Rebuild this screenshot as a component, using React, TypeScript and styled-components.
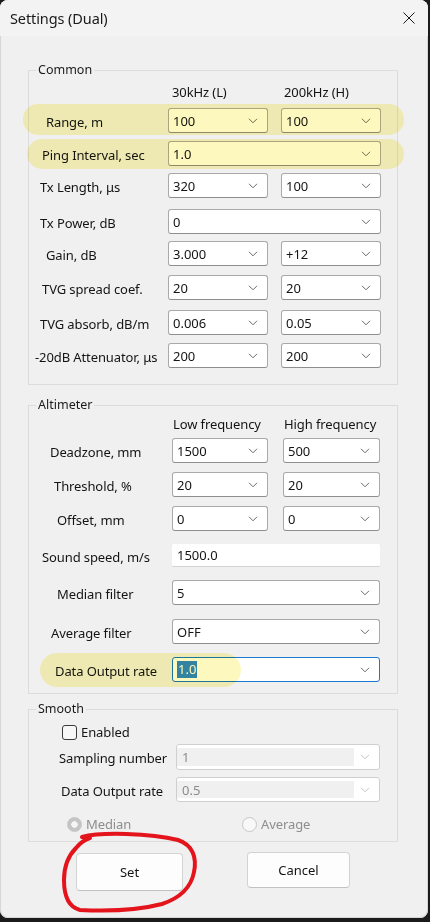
import React from "react";
import styled, { createGlobalStyle } from "styled-components";

const GlobalStyle = createGlobalStyle`
  html, body {
    margin: 0;
    padding: 0;
    background: #1b1b1b;
  }
  body {
    font-family: "Noto Sans", "Open Sans", Arial, sans-serif;
  }
`;

const UI_FONT = `"Noto Sans", "Open Sans", Arial, sans-serif`;

const Desktop = styled.div`
  width: 430px;
  height: 922px;
  background: #1b1b1b;
  overflow: hidden;
`;

const Window = styled.div`
  position: relative;
  width: 428px;
  height: 918px;
  background: #f0f0f0;
  border-radius: 8px;
  box-shadow: inset 0 0 0 1px #d6d6d6;
  display: flex;
  flex-direction: column;
  overflow: hidden;
  font-family: ${UI_FONT};
  color: #111;
`;

const TitleBar = styled.div`
  height: 36px;
  display: flex;
  align-items: center;
  justify-content: space-between;
  padding: 0 13px 0 10px;
  background: #f3f3f3;
`;

const Title = styled.span`
  font-size: 14.5px;
  color: #1a1a1a;
  letter-spacing: -0.1px;
`;

const CloseGlyph = styled.svg`
  width: 12px;
  height: 12px;
  display: block;
`;

const Body = styled.div`
  display: flex;
  flex-direction: column;
  padding: 26px 30px 0 28px;
`;

const Group = styled.fieldset<{ $mt?: number; $pt: number; $pb: number }>`
  margin: ${(p) => p.$mt ?? 0}px 0 0 0;
  padding: ${(p) => p.$pt}px 0 ${(p) => p.$pb}px 0;
  border: 1px solid #dcdcdc;
  border-radius: 0;
  min-width: 0;
  display: flex;
  flex-direction: column;
`;

const Caption = styled.legend`
  margin-left: 7px;
  padding: 0 2px;
  font-size: 12.5px;
  line-height: 16px;
  color: #1a1a1a;
`;

const Row = styled.div<{ $cols: string; $gap: number; $mt: number; $h?: number }>`
  display: grid;
  grid-template-columns: ${(p) => p.$cols};
  column-gap: ${(p) => p.$gap}px;
  align-items: center;
  height: ${(p) => p.$h ?? 25}px;
  margin-top: ${(p) => p.$mt}px;
`;

const Label = styled.span<{ $indent: number }>`
  padding-left: ${(p) => p.$indent}px;
  font-size: 13px;
  line-height: 16px;
  padding-top: 2px;
  color: #141414;
  white-space: nowrap;
  letter-spacing: -0.1px;
`;

const ColHead = styled.span`
  font-size: 13px;
  line-height: 16px;
  color: #141414;
  white-space: nowrap;
  letter-spacing: -0.1px;
`;

const Combo = styled.div<{ $span?: number; $state?: "normal" | "focus" | "off" }>`
  grid-column: span ${(p) => p.$span ?? 1};
  height: 100%;
  box-sizing: border-box;
  display: flex;
  align-items: center;
  justify-content: space-between;
  padding: 0 9px 0 4px;
  border-radius: 3px;
  border: 1px solid
    ${(p) =>
      p.$state === "focus" ? "#1a78d4" : p.$state === "off" ? "#cfcfcf" : "#a9a9a9"};
  border-bottom-color: ${(p) =>
    p.$state === "focus" ? "#1a78d4" : p.$state === "off" ? "#cfcfcf" : "#8e8e8e"};
  background: #ffffff;
`;

const ComboText = styled.span<{ $off?: boolean }>`
  flex: ${(p) => (p.$off ? "1 1 auto" : "0 1 auto")};
  align-self: ${(p) => (p.$off ? "stretch" : "center")};
  display: flex;
  align-items: center;
  margin: ${(p) => (p.$off ? "3px 6px 3px -4px" : "0")};
  padding-left: ${(p) => (p.$off ? "5px" : "0")};
  background: ${(p) => (p.$off ? "#f0f0f0" : "transparent")};
  font-size: 13px;
  line-height: 16px;
  color: ${(p) => (p.$off ? "#8c8c8c" : "#141414")};
  white-space: nowrap;
`;

const Selected = styled.span`
  background: #3388d8;
  color: #ffffff;
  padding: 0 1px;
  line-height: 17px;
`;

const ChevronGlyph = styled.svg`
  width: 10px;
  height: 6px;
  flex: none;
  display: block;
`;

const TextField = styled.div<{ $span?: number }>`
  grid-column: span ${(p) => p.$span ?? 1};
  height: 100%;
  box-sizing: border-box;
  display: flex;
  align-items: center;
  padding: 0 5px;
  background: #ffffff;
  border-bottom: 1px solid #d2d2d2;
  border-radius: 2px;
  font-size: 13px;
  color: #141414;
`;

const CheckRow = styled.label`
  display: flex;
  align-items: center;
  gap: 4px;
  height: 16px;
  padding-left: 33px;
`;

const CheckBox = styled.span`
  width: 13px;
  height: 13px;
  border: 1px solid #3a3a3a;
  border-radius: 3px;
  background: #f7f7f7;
  flex: none;
`;

const CheckText = styled.span`
  font-size: 13px;
  color: #141414;
  letter-spacing: -0.1px;
`;

const RadioRow = styled.div`
  display: grid;
  grid-template-columns: 175px 1fr;
  height: 16px;
  margin-top: 13px;
  padding-left: 38px;
`;

const RadioOption = styled.span`
  display: flex;
  align-items: center;
  gap: 4px;
`;

const RadioDot = styled.span<{ $checked?: boolean }>`
  width: 15px;
  height: 15px;
  box-sizing: border-box;
  border-radius: 50%;
  flex: none;
  border: 1px solid #c6c6c6;
  background: ${(p) =>
    p.$checked
      ? "radial-gradient(circle, #f4f4f4 0 3px, #c4c4c4 3.5px)"
      : "#f8f8f8"};
`;

const RadioText = styled.span`
  font-size: 13px;
  color: #8d8d8d;
  letter-spacing: -0.1px;
`;

const ButtonBar = styled.div`
  display: flex;
  align-items: flex-start;
  gap: 64px;
  margin-top: 10px;
  padding-left: 48px;
`;

const DialogButton = styled.button<{ $w: number; $h: number; $mt: number }>`
  width: ${(p) => p.$w}px;
  height: ${(p) => p.$h}px;
  margin-top: ${(p) => p.$mt}px;
  border: 1px solid #d3d3d3;
  border-bottom-color: #c2c2c2;
  border-radius: 4px;
  background: #fdfdfd;
  font-family: ${UI_FONT};
  font-size: 13px;
  color: #141414;
  padding: 0;
`;

const Markup = styled.svg`
  position: absolute;
  left: 0;
  top: 0;
  width: 428px;
  height: 918px;
  pointer-events: none;
`;

const Chevron = ({ off }: { off?: boolean }) => (
  <ChevronGlyph viewBox="0 0 10 6">
    <path
      d="M1 0.8 L5 4.8 L9 0.8"
      fill="none"
      stroke={off ? "#c4c4c4" : "#6a6a6a"}
      strokeWidth="1"
    />
  </ChevronGlyph>
);

type Field =
  | { kind: "combo"; value: React.ReactNode; span?: number; state?: "normal" | "focus" | "off" }
  | { kind: "text"; value: string; span?: number };

type RowSpec = { label: string; indent: number; mt: number; h?: number; fields: Field[] };

type Layout = { cols: string; gap: number };

// label column already excludes the gap that follows it
const COMMON: Layout = { cols: "126px 100px 100px", gap: 13 };
const ALTIMETER: Layout = { cols: "128px 96px 97px", gap: 15 };
const SMOOTH: Layout = { cols: "147px 204px", gap: 0 };

const commonRows: RowSpec[] = [
  { label: "Range, m", indent: 17, mt: 8, fields: [{ kind: "combo", value: "100" }, { kind: "combo", value: "100" }] },
  { label: "Ping Interval, sec", indent: 13, mt: 8, fields: [{ kind: "combo", value: "1.0", span: 2 }] },
  { label: "Tx Length, μs", indent: 11, mt: 7, fields: [{ kind: "combo", value: "320" }, { kind: "combo", value: "100" }] },
  { label: "Tx Power, dB", indent: 11, mt: 11, fields: [{ kind: "combo", value: "0", span: 2 }] },
  { label: "Gain, dB", indent: 17, mt: 7, fields: [{ kind: "combo", value: "3.000" }, { kind: "combo", value: "+12" }] },
  { label: "TVG spread coef.", indent: 13, mt: 9, fields: [{ kind: "combo", value: "20" }, { kind: "combo", value: "20" }] },
  { label: "TVG absorb, dB/m", indent: 11, mt: 10, fields: [{ kind: "combo", value: "0.006" }, { kind: "combo", value: "0.05" }] },
  { label: "-20dB Attenuator, μs", indent: 6, mt: 8, fields: [{ kind: "combo", value: "200" }, { kind: "combo", value: "200" }] },
];

const altimeterRows: RowSpec[] = [
  { label: "Deadzone, mm", indent: 21, mt: 6, fields: [{ kind: "combo", value: "1500" }, { kind: "combo", value: "500" }] },
  { label: "Threshold, %", indent: 25, mt: 9, fields: [{ kind: "combo", value: "20" }, { kind: "combo", value: "20" }] },
  { label: "Offset, mm", indent: 28, mt: 9, fields: [{ kind: "combo", value: "0" }, { kind: "combo", value: "0" }] },
  { label: "Sound speed, m/s", indent: 13, mt: 13, h: 23, fields: [{ kind: "text", value: "1500.0", span: 2 }] },
  { label: "Median filter", indent: 28, mt: 13, fields: [{ kind: "combo", value: "5", span: 2 }] },
  { label: "Average filter", indent: 22, mt: 14, fields: [{ kind: "combo", value: "OFF", span: 2 }] },
  {
    label: "Data Output rate",
    indent: 26,
    mt: 13,
    fields: [{ kind: "combo", value: <Selected>1.0</Selected>, span: 2, state: "focus" }],
  },
];

const smoothRows: RowSpec[] = [
  { label: "Sampling number", indent: 30, mt: 4, h: 26, fields: [{ kind: "combo", value: "1", state: "off" }] },
  { label: "Data Output rate", indent: 32, mt: 7, h: 25, fields: [{ kind: "combo", value: "0.5", state: "off" }] },
];

const FieldView = ({ f }: { f: Field }) => {
  if (f.kind === "text") return <TextField $span={f.span}>{f.value}</TextField>;
  const off = f.state === "off";
  return (
    <Combo $span={f.span} $state={f.state}>
      <ComboText $off={off}>{f.value}</ComboText>
      <Chevron off={off} />
    </Combo>
  );
};

const Rows = ({ rows, layout }: { rows: RowSpec[]; layout: Layout }) => (
  <>
    {rows.map((r) => (
      <Row key={r.label + r.mt} $cols={layout.cols} $gap={layout.gap} $mt={r.mt} $h={r.h}>
        <Label $indent={r.indent}>{r.label}</Label>
        {r.fields.map((f, i) => (
          <FieldView key={i} f={f} />
        ))}
      </Row>
    ))}
  </>
);

export default function App() {
  return (
    <Desktop>
      <GlobalStyle />
      <Window>
        <TitleBar>
          <Title>Settings (Dual)</Title>
          <CloseGlyph viewBox="0 0 12 12">
            <path d="M0.5 0.5 L11.5 11.5 M11.5 0.5 L0.5 11.5" stroke="#1a1a1a" strokeWidth="1" />
          </CloseGlyph>
        </TitleBar>

        <Body>
          <Group $pt={6} $pb={16}>
            <Caption>Common</Caption>
            <Row $cols="143px 112px 100px" $gap={0} $mt={0} $h={16}>
              <span />
              <ColHead>30kHz (L)</ColHead>
              <ColHead>200kHz (H)</ColHead>
            </Row>
            <Rows rows={commonRows} layout={COMMON} />
          </Group>

          <Group $mt={12} $pt={3} $pb={11}>
            <Caption>Altimeter</Caption>
            <Row $cols="144px 111px 100px" $gap={0} $mt={0} $h={16}>
              <span />
              <ColHead>Low frequency</ColHead>
              <ColHead>High frequency</ColHead>
            </Row>
            <Rows rows={altimeterRows} layout={ALTIMETER} />
          </Group>

          <Group $mt={7} $pt={7} $pb={10}>
            <Caption>Smooth</Caption>
            <CheckRow>
              <CheckBox />
              <CheckText>Enabled</CheckText>
            </CheckRow>
            <Rows rows={smoothRows} layout={SMOOTH} />
            <RadioRow>
              <RadioOption>
                <RadioDot $checked />
                <RadioText>Median</RadioText>
              </RadioOption>
              <RadioOption>
                <RadioDot />
                <RadioText>Average</RadioText>
              </RadioOption>
            </RadioRow>
          </Group>

          <ButtonBar>
            <DialogButton $w={107} $h={38} $mt={1}>Set</DialogButton>
            <DialogButton $w={103} $h={36} $mt={0}>Cancel</DialogButton>
          </ButtonBar>
        </Body>

        {/* highlighter strokes and pen loop drawn over the dialog */}
        <Markup viewBox="0 0 428 918">
          <g style={{ mixBlendMode: "multiply" }} fill="#fcf391" opacity="0.6">
            <rect x="23" y="104" width="381" height="31" rx="15" />
            <rect x="27" y="139" width="377" height="30" rx="15" />
            <rect x="40" y="653" width="201" height="34" rx="17" />
          </g>
          <path
            d="M82 837 C100 832 150 833 178 840 C193 845 197 858 194 872 C191 888 180 898 162 904 C135 911 100 911 80 910 C68 907 64 895 64 880 C64 866 68 856 76 848 C80 843 84 840 90 838"
            fill="none"
            stroke="#e4141d"
            strokeWidth="4"
            strokeLinecap="round"
            strokeLinejoin="round"
          />
        </Markup>
      </Window>
    </Desktop>
  );
}
